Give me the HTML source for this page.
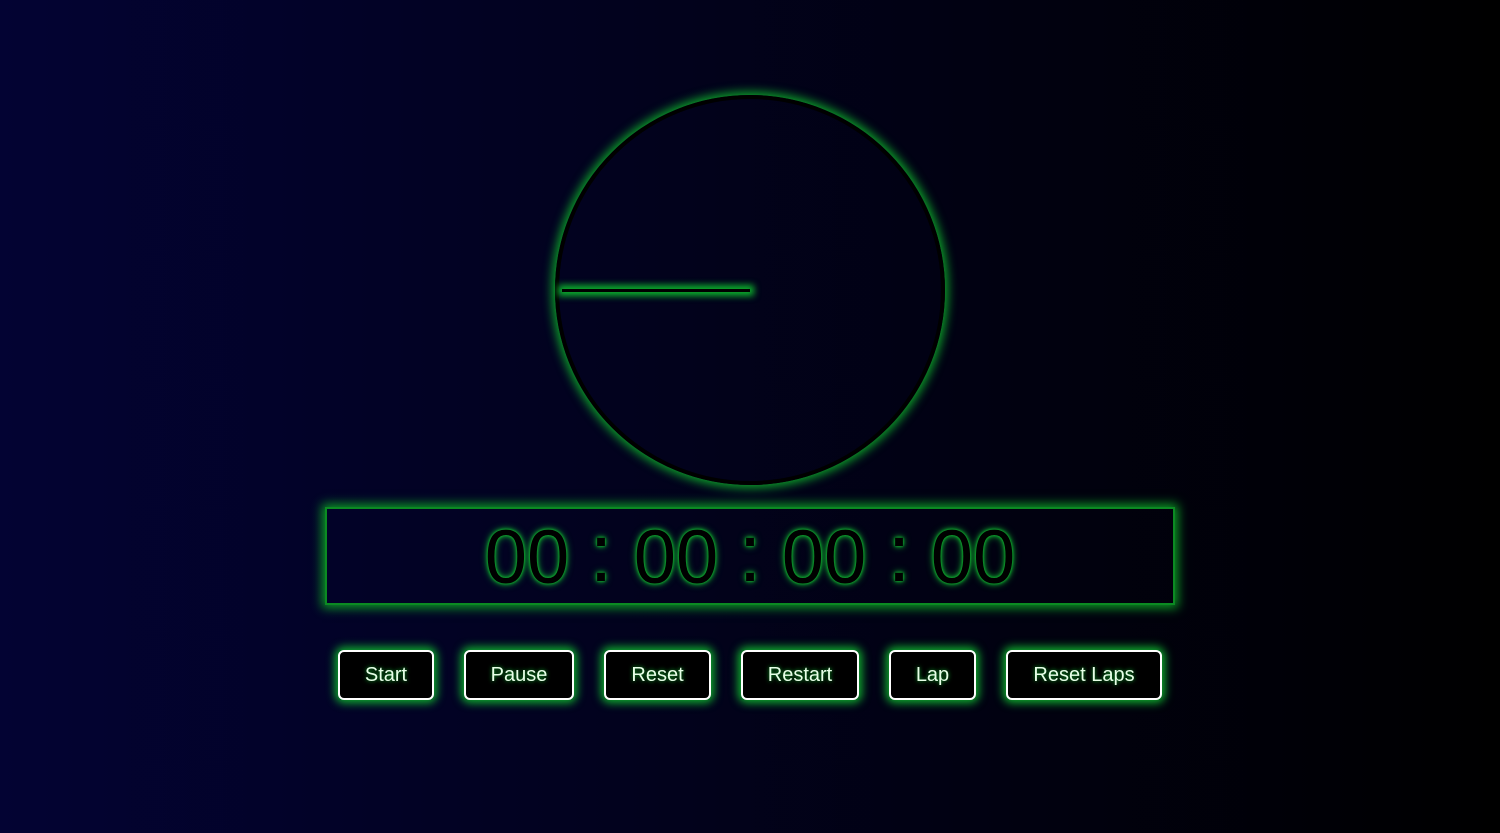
<!DOCTYPE html>
<html><head><style>
html,body{margin:0;padding:0;width:1500px;height:833px;overflow:hidden}
body{background:linear-gradient(to right,#030333,#000000);font-family:"Liberation Sans",sans-serif;position:relative}
.clock{position:absolute;left:555px;top:95px;width:382px;height:382px;border:4px solid #000;border-radius:50%;box-shadow:0 0 10px 3px #0da52a;}
.hand{position:absolute;left:562px;top:289px;width:188px;height:3px;background:#000;box-shadow:0 0 7px 4px #0cb02c}
.disp{position:absolute;left:325px;top:507px;width:846px;height:94px;border:2px solid #0b8a22;box-shadow:0 0 10px 3px #0c9a25}
.g{position:absolute;top:513px;font-size:76px;line-height:90px;color:#000;text-shadow:0 0 8px #10b030,0 0 4px #10b030,0 0 2px #10b030;transform:translateX(-50%)}
.c{font-size:82px;top:509px}
.b{position:absolute;top:650px;height:46px;border:2px solid #fff;border-radius:6px;background:#000;color:#e8ffe8;font-size:20px;line-height:46px;text-align:center;box-shadow:0 0 9px 3px #0fb02e;text-shadow:0 0 4px #0fb02e}
</style></head><body>
<div class="clock"></div>
<div class="hand"></div>
<div class="disp"></div>
<div class="g" style="left:527px">00</div>
<div class="g c" style="left:601px">:</div>
<div class="g" style="left:676px">00</div>
<div class="g c" style="left:750px">:</div>
<div class="g" style="left:824px">00</div>
<div class="g c" style="left:899px">:</div>
<div class="g" style="left:973px">00</div>
<div class="b" style="left:338px;width:92px">Start</div>
<div class="b" style="left:464px;width:106px">Pause</div>
<div class="b" style="left:604px;width:103px">Reset</div>
<div class="b" style="left:741px;width:114px">Restart</div>
<div class="b" style="left:889px;width:83px">Lap</div>
<div class="b" style="left:1006px;width:152px">Reset Laps</div>
</body></html>
